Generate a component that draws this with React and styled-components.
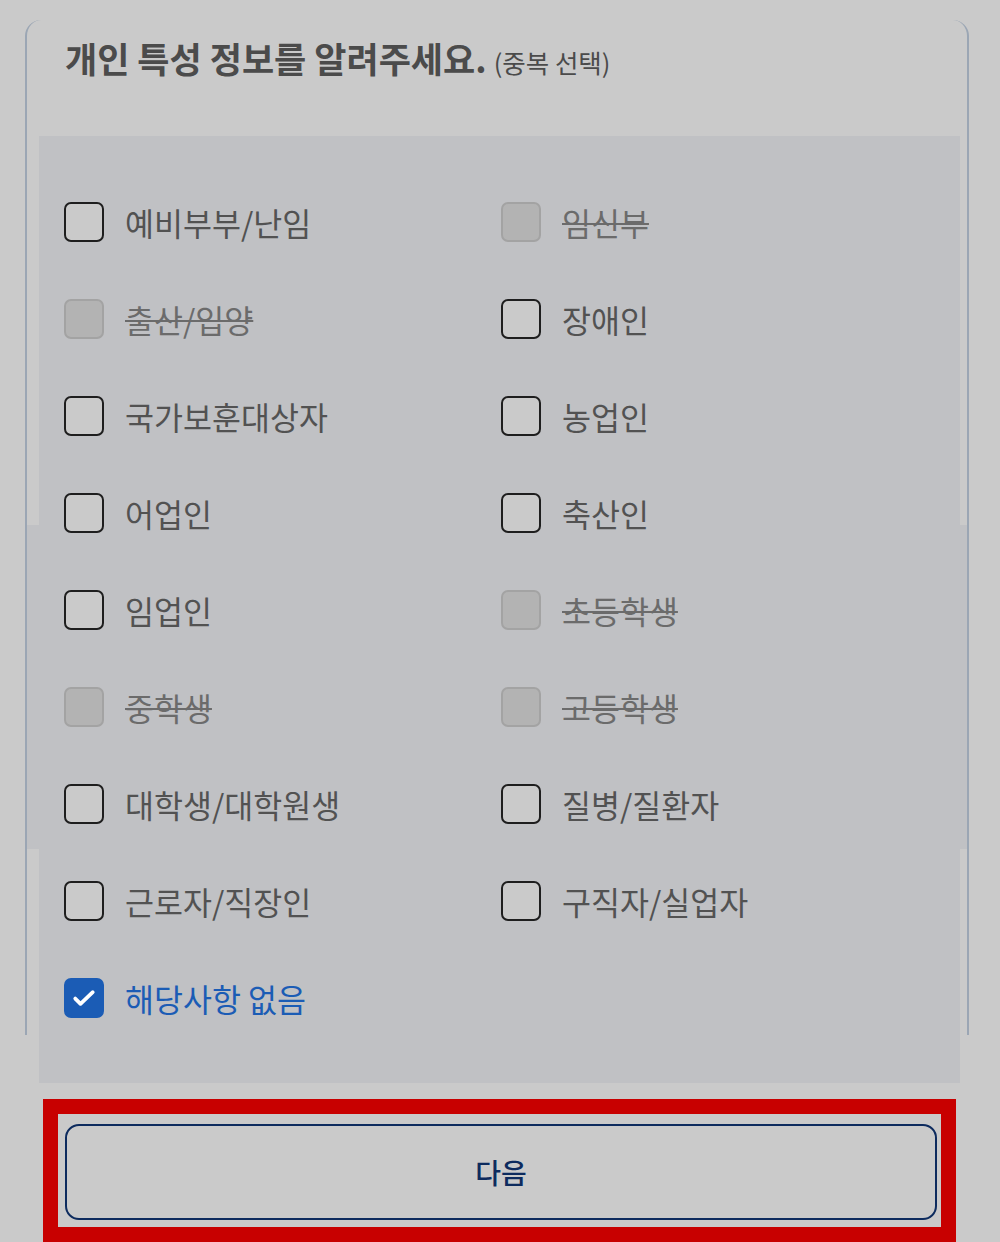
import React from 'react';
import styled, { createGlobalStyle } from 'styled-components';

const GlobalStyle = createGlobalStyle`
  body {
    margin: 0;
    background-color: #cacaca;
    font-family: "Noto Sans CJK KR", "Noto Sans", sans-serif;
  }
`;

const Card = styled.section`
  height: 1015px;
  margin: 20px 31px 0 25px;
  border-left: 2px solid #9ba6b4;
  border-right: 2px solid #9ba6b4;
  border-radius: 16px 16px 0 0;
`;

const Title = styled.h2`
  display: flex;
  align-items: baseline;
  gap: 7px;
  margin: 0 0 48px;
  padding: 12px 0 0 38px;
  font-size: 35px;
  font-weight: 700;
  line-height: 52px;
  color: #4b4b4b;

  & small {
    font-size: 25.5px;
    font-weight: 400;
  }
`;

const Panel = styled.ul`
  position: relative;
  display: grid;
  grid-template-columns: 1fr 1fr;
  grid-auto-rows: 97px;
  margin: 0 7px 0 12px;
  padding: 37px 22px 37px 25px;
  list-style: none;
  background-color: #c0c1c4;

  &::before {
    content: '';
    position: absolute;
    top: 389px;
    left: -12px;
    right: -7px;
    height: 324px;
    background-color: #c0c1c4;
    z-index: -1;
  }
`;

const Option = styled.li`
  display: flex;
  align-items: center;
  gap: 21px;
`;

const Box = styled.span`
  display: flex;
  align-items: center;
  justify-content: center;
  box-sizing: border-box;
  width: 40px;
  height: 40px;
  border-radius: 7px;
  border: 2px solid ${({ $state }) =>
    $state === 'off' ? '#a3a3a3' : $state === 'on' ? '#1b5cb5' : '#1e1e1e'};
  background-color: ${({ $state }) =>
    $state === 'off' ? '#b3b3b3' : $state === 'on' ? '#1b5cb5' : '#cacaca'};
`;

const Label = styled.span`
  font-size: 31.5px;
  line-height: 40px;
  color: ${({ $state }) =>
    $state === 'off' ? '#6b6b6b' : $state === 'on' ? '#1b5cb5' : '#525252'};
  text-decoration: ${({ $state }) => ($state === 'off' ? 'line-through' : 'none')};
  text-decoration-thickness: 2px;
`;

const Footer = styled.div`
  margin: 64px 44px 0 43px;
  padding: 10px 4px 7px 7px;
  border: 15px solid #c80000;
`;

const NextButton = styled.button`
  display: block;
  width: 100%;
  height: 96px;
  border: 2px solid #0d2b5e;
  border-radius: 14px;
  background: transparent;
  font-family: inherit;
  font-size: 28px;
  font-weight: 500;
  color: #0d2b5e;
`;

const options = [
  ['예비부부/난임', 'none'],
  ['임신부', 'off'],
  ['출산/입양', 'off'],
  ['장애인', 'none'],
  ['국가보훈대상자', 'none'],
  ['농업인', 'none'],
  ['어업인', 'none'],
  ['축산인', 'none'],
  ['임업인', 'none'],
  ['초등학생', 'off'],
  ['중학생', 'off'],
  ['고등학생', 'off'],
  ['대학생/대학원생', 'none'],
  ['질병/질환자', 'none'],
  ['근로자/직장인', 'none'],
  ['구직자/실업자', 'none'],
  ['해당사항 없음', 'on'],
];

const Check = () => (
  <svg width="28" height="28" viewBox="0 0 24 24" fill="none">
    <path d="M4.5 12.5l4.5 4.5L19.5 7" stroke="#fff" strokeWidth="3.2" strokeLinecap="round" strokeLinejoin="round" />
  </svg>
);

const App = () => {
  return (
    <>
      <GlobalStyle />
      <Card>
        <Title>
          개인 특성 정보를 알려주세요.
          <small>(중복 선택)</small>
        </Title>
        <Panel>
          {options.map(([label, state]) => (
            <Option key={label}>
              <Box $state={state}>{state === 'on' && <Check />}</Box>
              <Label $state={state}>{label}</Label>
            </Option>
          ))}
        </Panel>
      </Card>
      <Footer>
        <NextButton>다음</NextButton>
      </Footer>
    </>
  );
};

export default App;
